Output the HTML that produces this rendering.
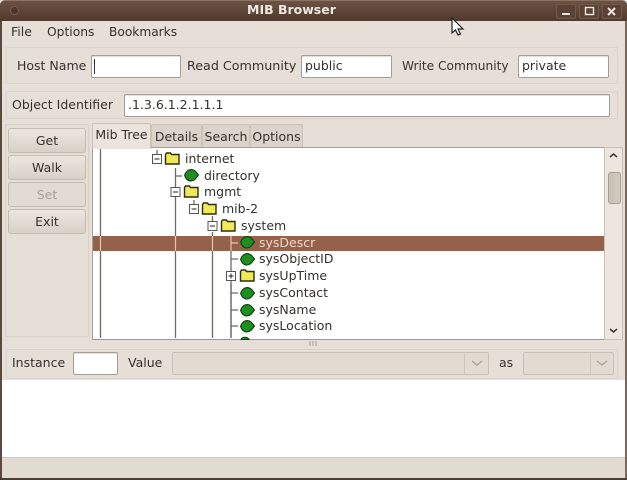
<!DOCTYPE html>
<html>
<head>
<meta charset="utf-8">
<style>
html,body{margin:0;padding:0;}
body{width:627px;height:480px;overflow:hidden;background:#e6dfd7;position:relative;font-family:"DejaVu Sans",sans-serif;font-size:12.5px;color:#35312d;}
#w{position:absolute;left:0;top:0;width:627px;height:480px;filter:blur(.35px);}
.a{position:absolute;box-sizing:border-box;}
.t{position:absolute;white-space:nowrap;line-height:16px;}
.in{position:absolute;box-sizing:border-box;background:#fff;border:1px solid #a59d94;border-radius:2px;box-shadow:inset 0 1px 0 #e4e0dc;}
.fr{position:absolute;box-sizing:border-box;border:1px solid #dbd3ca;border-radius:2px;background:#e6dfd7;}
.btn{position:absolute;left:8px;width:78px;height:25px;box-sizing:border-box;border:1px solid #c4bbb1;border-radius:3px;background:linear-gradient(#ece6df,#d9d1c8);text-align:center;line-height:24px;}
.tab{position:absolute;box-sizing:border-box;top:124px;height:24px;background:#dcd4cb;border:1px solid #cbc2b8;border-bottom:0;line-height:23px;text-align:center;border-radius:2px 2px 0 0;}
.dis{position:absolute;box-sizing:border-box;border:1px solid #c9c1b7;border-radius:2px;background:#e2dbd2;}
.row{position:absolute;white-space:nowrap;line-height:16px;color:#35312d;}
</style>
</head>
<body>
<div id="w">
<!-- titlebar -->
<div class="a" style="left:0;top:0;width:627px;height:21px;background:linear-gradient(#6a5244,#50392c);border-top:1px solid #8a7262;border-radius:5px 5px 0 0;"></div>
<div class="t" style="left:247px;top:2px;color:#eee8e0;font-weight:bold;font-size:12.5px;">MIB Browser</div>
<div class="a" style="left:10px;top:6px;width:9px;height:9px;border-radius:50%;border:1px solid #75604f;background:#4d372b;"></div>
<div class="a" style="left:556px;top:4px;width:20px;height:15px;border:1px solid #6f5a4c;border-radius:2px;background:#5a4336;"></div>
<div class="a" style="left:579px;top:4px;width:20px;height:15px;border:1px solid #6f5a4c;border-radius:2px;background:#5a4336;"></div>
<div class="a" style="left:602px;top:4px;width:20px;height:15px;border:1px solid #6f5a4c;border-radius:2px;background:#5a4336;"></div>
<svg class="a" style="left:0;top:0;" width="627" height="30">
<path d="M562 14h8" stroke="#eee8e0" stroke-width="2"/>
<rect x="585.5" y="7.5" width="8" height="7" fill="none" stroke="#eee8e0" stroke-width="1.4"/>
<path d="M608 8l7 7M615 8l-7 7" stroke="#eee8e0" stroke-width="2"/>
</svg>
<!-- window edges -->
<div class="a" style="left:0;top:21px;width:2px;height:459px;background:#5a4a3e;"></div>
<div class="a" style="left:625px;top:21px;width:2px;height:459px;background:#7a6a5e;"></div>
<div class="a" style="left:0;top:478px;width:627px;height:2px;background:#4a3d33;"></div>
<!-- menu -->
<div class="t" style="left:11px;top:24px;">File</div>
<div class="t" style="left:47px;top:24px;font-size:12.3px;">Options</div>
<div class="t" style="left:109px;top:24px;font-size:12.2px;">Bookmarks</div>
<!-- host row -->
<div class="fr" style="left:6px;top:47px;width:612px;height:37px;"></div>
<div class="t" style="left:17px;top:58px;">Host Name</div>
<div class="in" style="left:91px;top:55px;width:90px;height:23px;"></div>
<div class="a" style="left:94px;top:59px;width:1px;height:15px;background:#333;"></div>
<div class="t" style="left:187px;top:58px;font-size:12.7px;">Read Community</div>
<div class="in" style="left:301px;top:55px;width:91px;height:23px;"></div>
<div class="t" style="left:305px;top:58px;">public</div>
<div class="t" style="left:402px;top:58px;font-size:12.2px;">Write Community</div>
<div class="in" style="left:518px;top:55px;width:91px;height:23px;"></div>
<div class="t" style="left:522px;top:58px;">private</div>
<!-- oid row -->
<div class="fr" style="left:6px;top:91px;width:612px;height:28px;"></div>
<div class="t" style="left:12px;top:97px;">Object Identifier</div>
<div class="in" style="left:124px;top:94px;width:486px;height:23px;"></div>
<div class="t" style="left:128px;top:97px;">.1.3.6.1.2.1.1.1</div>
<!-- buttons -->
<div class="a" style="left:5px;top:124px;width:84px;height:213px;border:1px solid #d8d0c7;border-radius:2px;"></div>
<div class="btn" style="top:128px;">Get</div>
<div class="btn" style="top:155px;">Walk</div>
<div class="btn" style="top:182px;color:#a8a097;background:#e2dbd3;">Set</div>
<div class="btn" style="top:209px;">Exit</div>
<!-- tabs -->
<div class="tab" style="left:151px;width:51px;">Details</div>
<div class="tab" style="left:202px;width:48px;">Search</div>
<div class="tab" style="left:250px;width:53px;">Options</div>
<div class="tab" style="left:92px;width:59px;top:123px;height:26px;background:#eae4dd;z-index:3;line-height:22px;">Mib Tree</div>
<!-- tree -->
<div class="a" style="left:92px;top:147px;width:513px;height:193px;background:#fff;border:1px solid #a89f95;border-right:0;border-bottom:1px solid #a0978d;"></div>
<div class="a" style="left:93px;top:236px;width:511px;height:15px;background:#96614a;"></div>
<div class="a" style="left:604px;top:147px;width:19px;height:193px;background:#ece6df;border:1px solid #c8c0b6;"></div>
<div class="a" style="left:608px;top:172px;width:13px;height:32px;background:linear-gradient(90deg,#c9bfb4,#d4cbc1);border:1px solid #a89e93;border-radius:3px;"></div>
<svg class="a" style="left:0;top:0;" width="627" height="346">
<path d="M610 157l3.500-3 3.500 3M610 329l3.500 3 3.500-3" fill="none" stroke="#3a3632" stroke-width="1.500"/>
<defs>
<g id="f"><path d="M.5 12V2.500l1-1.500h4l1 1.500h7.500V12z" fill="#eee85a" stroke="#2e2e0c" stroke-width="1.400"/></g>
<g id="l"><path d="M.6 6.500C1.500 2.700 4.500.6 7.500.6c2.500 0 4 1.500 7 5.400-3 4-4.500 6-7.500 6-3 0-5.500-2.400-6.400-5.500z" fill="#1c8f20" stroke="#0c3f0e" stroke-width="1.100"/></g>
<g id="m"><rect x="-4.500" y="-4.500" width="9" height="9" fill="#fff" stroke="#555" stroke-width="1"/><path d="M-2.500 0h5" stroke="#222" stroke-width="1"/></g>
<g id="p"><rect x="-4.500" y="-4.500" width="9" height="9" fill="#fff" stroke="#555" stroke-width="1"/><path d="M-2.500 0h5M0-2.500v5" stroke="#222" stroke-width="1"/></g>
</defs>
<g stroke="#6e6a66" stroke-width="1.300" fill="none">
<path d="M100.500 148V236M100.500 251V338"/>
<path d="M175.500 168V236M175.500 251V338"/>
<path d="M212.500 232V236M212.500 251V338"/>
<path d="M231 251V338"/>
<path d="M175.500 176H182M194 200V204M212.500 216V222M157 150V154M231 284V338M231 259H238M231 293H238M231 310H238M231 326H238"/>
</g>
<path d="M100.500 236V251M175.500 236V251M212.500 236V251M231 236V251M231 243H238" stroke="#e8c4b0" stroke-width="1.200"/>
<use href="#m" x="157" y="159"/><use href="#f" x="165" y="152"/>
<use href="#l" x="184" y="169"/>
<use href="#m" x="175.500" y="192"/><use href="#f" x="184" y="185"/>
<use href="#m" x="194" y="209"/><use href="#f" x="202" y="202"/>
<use href="#m" x="212.500" y="226"/><use href="#f" x="221" y="219"/>
<use href="#l" x="240" y="236"/><use href="#l" x="240" y="253"/>
<use href="#p" x="231" y="276"/><use href="#f" x="240" y="269"/>
<use href="#l" x="240" y="287"/><use href="#l" x="240" y="304"/><use href="#l" x="240" y="320"/>
<path d="M241 339.500c1-3 7-3 8 0z" fill="#1c8f20" stroke="#0c3f0e"/>
<path d="M310 341v5M313 341v5M316 341v5" stroke="#a89f95" stroke-width="1"/>
</svg>
<div class="row" style="left:185px;top:151px;">internet</div>
<div class="row" style="left:204px;top:168px;">directory</div>
<div class="row" style="left:204px;top:184px;">mgmt</div>
<div class="row" style="left:222px;top:201px;">mib-2</div>
<div class="row" style="left:241px;top:218px;">system</div>
<div class="row" style="left:259px;top:235px;color:#f0d8cc;">sysDescr</div>
<div class="row" style="left:259px;top:251px;">sysObjectID</div>
<div class="row" style="left:259px;top:268px;">sysUpTime</div>
<div class="row" style="left:259px;top:285px;">sysContact</div>
<div class="row" style="left:259px;top:302px;">sysName</div>
<div class="row" style="left:259px;top:318px;">sysLocation</div>
<!-- bottom row -->
<div class="fr" style="left:6px;top:349px;width:612px;height:30px;"></div>
<div class="t" style="left:12px;top:355px;">Instance</div>
<div class="in" style="left:73px;top:352px;width:45px;height:23px;"></div>
<div class="t" style="left:128px;top:355px;">Value</div>
<div class="dis" style="left:172px;top:352px;width:317px;height:23px;"></div>
<div class="a" style="left:464px;top:353px;width:1px;height:21px;background:#cfc7bd;"></div>
<div class="t" style="left:499px;top:355px;">as</div>
<div class="dis" style="left:523px;top:352px;width:91px;height:23px;"></div>
<div class="a" style="left:590px;top:353px;width:1px;height:21px;background:#cfc7bd;"></div>
<svg class="a" style="left:0;top:345px;" width="627" height="40">
<path d="M472 16l5 4 5-4M597 16l5 4 5-4" fill="none" stroke="#a89f95" stroke-width="1.300"/>
</svg>
<!-- text area -->
<div class="a" style="left:2px;top:380px;width:623px;height:78px;background:#fff;"></div>
<div class="a" style="left:2px;top:457px;width:623px;height:1px;background:#cfc7bd;"></div>
<div class="a" style="left:2px;top:458px;width:623px;height:20px;background:#e2dbd2;"></div>
<!-- cursor -->
<svg class="a" style="left:450px;top:16px;" width="18" height="22">
<path d="M2 2v15l3.500-3 2.500 5 2.500-1-2.500-5h5z" fill="#fff" stroke="#222" stroke-width="1.200"/>
</svg>
</div>
</body>
</html>
